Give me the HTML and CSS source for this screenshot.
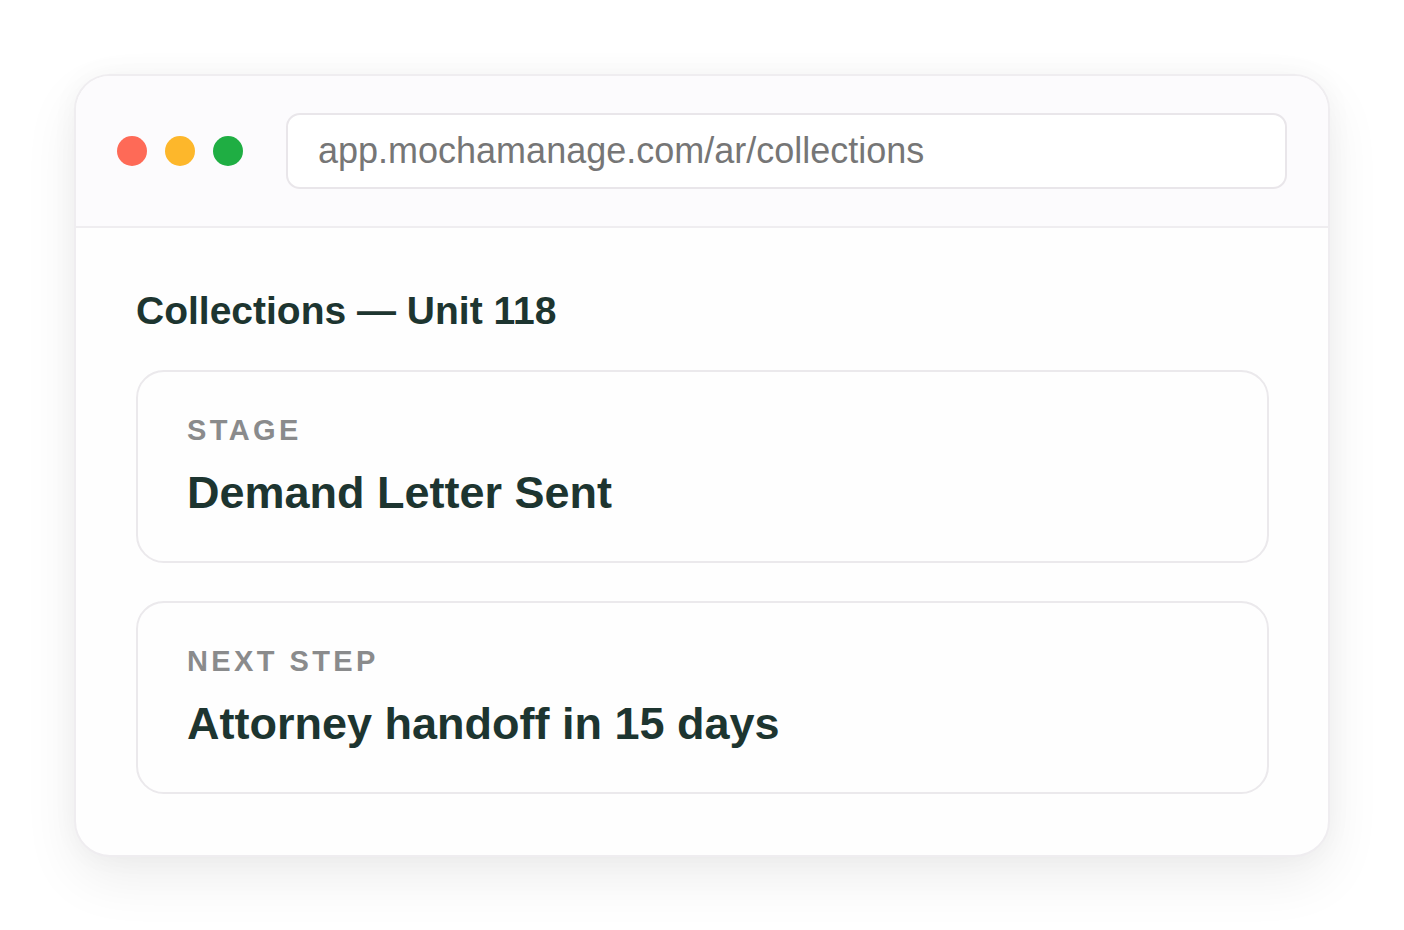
FILE: index.html
```html
<!DOCTYPE html>
<html lang="en">
<head>
<meta charset="utf-8">
<title>Collections — Unit 118</title>
<link rel="stylesheet" href="styles.css">
</head>
<body>
<div class="window">
  <div class="toolbar">
    <div class="dots">
      <span class="dot dot-red"></span>
      <span class="dot dot-yellow"></span>
      <span class="dot dot-green"></span>
    </div>
    <div class="url">app.mochamanage.com/ar/collections</div>
  </div>
  <div class="content">
    <h1 class="title">Collections — Unit 118</h1>
    <div class="card">
      <div class="label">STAGE</div>
      <div class="value">Demand Letter Sent</div>
    </div>
    <div class="card">
      <div class="label">NEXT STEP</div>
      <div class="value">Attorney handoff in 15 days</div>
    </div>
  </div>
</div>
</body>
</html>
```
FILE: styles.css
```css
html, body {
  margin: 0;
  padding: 0;
}
body {
  height: 100vh;
  background: #ffffff;
  display: flex;
  align-items: center;
  justify-content: center;
  font-family: "Liberation Sans", Arial, sans-serif;
}
.window {
  width: 1256px;
  height: 783px;
  box-sizing: border-box;
  border: 2px solid #efedf0;
  border-radius: 36px;
  overflow: hidden;
  background: #fefefe;
  box-shadow: 0 22px 55px rgba(0, 0, 0, 0.07), 0 0 28px rgba(0, 0, 0, 0.035);
  display: flex;
  flex-direction: column;
}
.toolbar {
  background: #fcfbfd;
  border-bottom: 2px solid #efedf0;
  padding: 37px 41px;
  display: flex;
  align-items: center;
  gap: 43px;
}
.dots {
  display: flex;
  gap: 18px;
}
.dot {
  width: 30px;
  height: 30px;
  border-radius: 50%;
}
.dot-red { background: #fe6a57; }
.dot-yellow { background: #fdb72b; }
.dot-green { background: #1fae43; }
.url {
  flex: 1;
  height: 76px;
  box-sizing: border-box;
  border: 2px solid #e9e6ea;
  border-radius: 14px;
  background: #ffffff;
  padding-left: 30px;
  display: flex;
  align-items: center;
  font-size: 36px;
  color: #767676;
}
.content {
  flex: 1;
  padding: 59px 59px 0 60px;
  display: flex;
  flex-direction: column;
}
.title {
  margin: 0 0 36px 0;
  font-size: 39px;
  line-height: 47px;
  font-weight: 700;
  color: #1d3530;
}
.card {
  height: 193px;
  box-sizing: border-box;
  border: 2px solid #ebe9ec;
  border-radius: 28px;
  padding: 41px 49px 0 49px;
  margin-bottom: 38px;
}
.label {
  font-size: 29px;
  line-height: 34px;
  font-weight: 700;
  letter-spacing: 3.4px;
  color: #8a8b8c;
}
.value {
  margin-top: 19px;
  font-size: 45px;
  line-height: 54px;
  font-weight: 700;
  color: #1d3530;
}
```
